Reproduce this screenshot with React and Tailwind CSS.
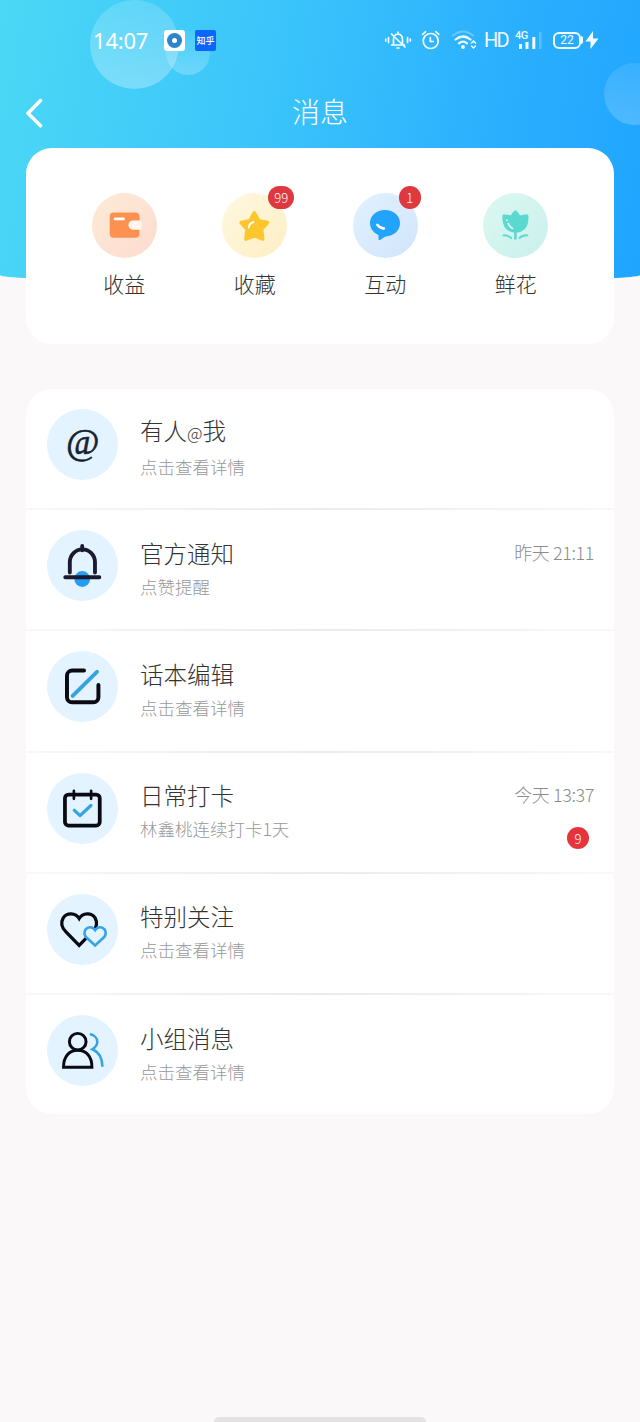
import React from 'react';

const WalletIcon = () => (
  <svg viewBox="0 0 65 65" className="h-full w-full">
    <rect x="17.7" y="19.5" width="29.8" height="25.3" rx="4" fill="#fd9150" />
    <path d="M23 25.9h8.500" stroke="#fff" strokeWidth="2.6" strokeLinecap="round" />
    <path d="M41 27.5h6.5q2 0 2 2v5.2q0 2-2 2H41a4.6 4.6 0 0 1 0-9.2z" fill="#fff6f0" />
  </svg>
);

const StarIcon = () => (
  <svg viewBox="0 0 65 65" className="h-full w-full">
    <path
      d="M32.3 20l4.4 7.800 8.800 1.700-5.900 6.700 1 9.800-8.300-3.200-8.300 3.200 1-9.800-5.900-6.700 8.800-1.700z"
      fill="#fdc62c"
      stroke="#fdc62c"
      strokeWidth="3.600"
      strokeLinejoin="round"
    />
    <path d="M26.700 34.500q.6-4.300 4.800-5.500" fill="none" stroke="#fff" strokeWidth="1.900" strokeLinecap="round" />
  </svg>
);

const BubbleIcon = () => (
  <svg viewBox="0 0 65 65" className="h-full w-full">
    <path
      d="M32 17c8.600 0 15 5.600 15 13 0 7.800-6.200 13-14.500 13.400-2.500 1.400-4.300 3-5.600 3.600-1 .4-1.500-.3-1.300-1.200l-.2-3.900C20.500 39.700 17 35.600 17 30c0-7.400 6.400-13 15-13z"
      fill="#22a3fd"
    />
    <path d="M24.300 31.700q2.500 3.500 6.700 3.800" fill="none" stroke="#fff" strokeWidth="2.400" strokeLinecap="round" />
  </svg>
);

const FlowerIcon = () => (
  <svg viewBox="0 0 65 65" className="h-full w-full">
    <path
      d="M32.400 17q3.300 2.600 4.600 5.600 3.600-1.500 7.400-1 1 .2 1 1.200C46 33.500 41.500 38.700 33.700 39.500V46.500h-2.600v-7C23.500 38.700 19 33.500 19.400 22.800q0-1 1-1.200 3.800-.5 7.400 1 1.300-3 4.600-5.600z"
      fill="#5bd9d1"
    />
    <path
      d="M20.300 42.300c3.600-.3 6 .7 8 2.900M44.500 42.300c-3.600-.3-6 .7-8 2.900"
      fill="none"
      stroke="#5bd9d1"
      strokeWidth="1.800"
      strokeLinecap="round"
    />
    <path d="M25.300 30.500q1 3.500 4.200 5" fill="none" stroke="#e8fbf8" strokeWidth="1.600" strokeLinecap="round" />
    <circle cx="23.900" cy="27.200" r="0.900" fill="#e8fbf8" />
  </svg>
);

const BellIcon = () => (
  <svg viewBox="0 0 70 70" className="h-full w-full" fill="none" stroke="#1b1a30" strokeWidth="3.800" strokeLinecap="round">
    <circle cx="34.700" cy="48.300" r="7.800" fill="#259df0" stroke="none" />
    <path d="M34.700 15.800V20M22.500 42V31.500a12.400 12.400 0 0 1 24.800 0V42M18 46.600h33.600" />
  </svg>
);

const EditIcon = () => (
  <svg viewBox="0 0 70 70" className="h-full w-full" fill="none" strokeLinecap="round">
    <path d="M36.500 19.300H24.700a5 5 0 0 0-5 5V45.500a5 5 0 0 0 5 5h21a5 5 0 0 0 5-5V33.500" stroke="#0a0a12" strokeWidth="3.900" />
    <path d="M25.300 44.200L49.300 20.500" stroke="#36a3e0" strokeWidth="3.800" />
  </svg>
);

const CalendarIcon = () => (
  <svg viewBox="0 0 70 70" className="h-full w-full" fill="none" strokeLinecap="round">
    <rect x="17.700" y="21.300" width="34.300" height="30.500" rx="3.500" stroke="#0a0a12" strokeWidth="3.700" />
    <path d="M26.500 17.500V25.500M43.500 17.500V25.500" stroke="#0a0a12" strokeWidth="2.600" />
    <path d="M27 36.800l5.600 5.200L43.300 32" stroke="#36a3e0" strokeWidth="3.200" strokeLinejoin="round" />
  </svg>
);

const HeartsIcon = () => (
  <svg viewBox="0 0 70 70" className="h-full w-full">
    <path
      d="M31.700 24.200C28.200 18.200 19.500 18 16 23.500 13.200 28.500 15 33.500 18.500 37.200L31.700 50.700 44.900 37.200C48.400 33.500 50.200 28.500 47.400 23.500 43.900 18 35.200 18.200 31.700 24.200z"
      fill="none"
      stroke="#0a0a12"
      strokeWidth="3.200"
    />
    <path
      d="M47.400 35.600C45 32 40.400 31.800 38 35 36 38.300 37 41.200 39.400 43.400L47.400 50.800 55.400 43.400C57.800 41.200 58.800 38.300 56.800 35 54.400 31.800 49.800 32 47.400 35.600z"
      fill="#e3f3ff"
      stroke="#36a3e8"
      strokeWidth="2.600"
    />
  </svg>
);

const GroupIcon = () => (
  <svg viewBox="0 0 70 70" className="h-full w-full" fill="none" strokeWidth="2.900">
    <circle cx="30.300" cy="26.300" r="8.200" stroke="#0a0a12" />
    <path d="M16.300 51.500c0-10.500 5.500-16.700 14-16.700s14 6.200 14 16.700z" stroke="#0a0a12" />
    <path d="M42.300 18.800c4.500 1 7.300 4.200 7.300 7.600 0 3.200-2 5.600-4.900 7.400 6.300 2.700 9.800 9 10 17.200" stroke="#36a3e0" strokeWidth="2.500" />
  </svg>
);

const AtIcon = () => (
  <span className="-mt-1.5 font-['Liberation_Serif'] text-[36px] italic leading-none text-[#16222f] [-webkit-text-stroke:0.6px_#16222f]">@</span>
);

const StatusIcons = () => (
  <div className="flex h-5 items-center text-[#f2fbff]">
    <svg viewBox="0 0 28 20" className="h-5 w-7" fill="none" stroke="currentColor" strokeWidth="1.700" strokeLinecap="round">
      <path d="M1.700 9v2M4.500 7.500v5M23.500 7.500v5M26.300 9v2M7.500 15h13M9.500 15V9.500q0-5 4.500-5.500 4.500.5 4.500 5.500V15M14 2.200V4M13 18h2M7.500 4l13.500 13" />
    </svg>
    <svg viewBox="0 0 20 20" className="ml-[9px] h-5 w-5" fill="none" stroke="currentColor" strokeWidth="1.700" strokeLinecap="round">
      <circle cx="9.700" cy="11" r="7.500" />
      <path d="M9.300 7.500v4h3M1.600 4.300l3-2.600M17.800 4.300l-3-2.600" />
    </svg>
    <svg viewBox="0 0 26 20" className="ml-2.5 h-5 w-[26px]" fill="none" stroke="currentColor" strokeLinecap="round">
      <path d="M2 5.500q10-8 20 0" strokeWidth="2" opacity="0.3" />
      <path d="M4.500 9.500q7.500-6 15 0M8 13.300q4-3.200 8 0" strokeWidth="2.200" />
      <circle cx="12" cy="17" r="1.900" fill="currentColor" stroke="none" />
      <path d="M20.500 13l2-2 2 2M20.500 16l2 2 2-2" strokeWidth="1.500" />
    </svg>
    <span className="ml-[7px] w-[25px] font-['Roboto'] text-[20px] font-normal leading-5 tracking-[-1.8px]">HD</span>
    <div className="ml-1.5 flex h-5 items-end">
      <span className="w-[13px] self-start font-['Roboto'] text-[11px] font-medium leading-3 tracking-[-0.5px]">4G</span>
      <svg viewBox="0 0 24 20" className="-ml-2.5 h-5 w-6" fill="currentColor">
        <path d="M1 14h3v5H1zM7.500 12h3v7h-3zM14.300 7h3v12h-3z" />
        <path d="M21 2h2.500v17H21z" opacity="0.25" />
      </svg>
    </div>
    <div className="ml-[11px] flex h-[17px] w-7 items-center justify-center rounded-[6px] border-2 border-current font-['Roboto'] text-[12px] font-normal leading-none">
      22
    </div>
    <div className="h-2 w-[2px] rounded-r bg-current"></div>
    <svg viewBox="0 0 14 20" className="ml-0.5 h-5 w-3.5" fill="currentColor">
      <path d="M8 1v7.500h5.500L5.500 19v-7.500H0.500z" />
    </svg>
  </div>
);

const shortcuts = [
  { name: '收益', icon: WalletIcon, bg: 'bg-linear-to-br from-[#fdebd6] to-[#fddbd0]' },
  { name: '收藏', icon: StarIcon, bg: 'bg-linear-to-br from-[#fff8e2] to-[#fdeec2]', badge: 99 },
  { name: '互动', icon: BubbleIcon, bg: 'bg-linear-to-br from-[#e0f2fe] to-[#d2e4fb]', badge: 1 },
  { name: '鲜花', icon: FlowerIcon, bg: 'bg-linear-to-br from-[#dcf8ef] to-[#c9f0ee]' },
];

const messages = [
  { title: <>有人<span className="text-[17px]">@</span>我</>, desc: '点击查看详情', icon: AtIcon },
  { title: '官方通知', desc: '点赞提醒', icon: BellIcon, time: '昨天 21:11' },
  { title: '话本编辑', desc: '点击查看详情', icon: EditIcon },
  { title: '日常打卡', desc: '林鑫桃连续打卡1天', icon: CalendarIcon, time: '今天 13:37', badge: 9 },
  { title: '特别关注', desc: '点击查看详情', icon: HeartsIcon },
  { title: '小组消息', desc: '点击查看详情', icon: GroupIcon },
];

const Shortcut = ({ item }) => {
  const Icon = item.icon;
  return (
    <div className="flex flex-col items-center">
      <div className={`relative size-[65px] rounded-full ${item.bg}`}>
        <Icon />
        {item.badge && (
          <span className="absolute -top-[7px] left-[46px] flex h-[23px] min-w-[22px] items-center justify-center rounded-full bg-[#e0383f] px-[6px] text-[13px] font-light leading-none text-white">
            {item.badge}
          </span>
        )}
      </div>
      <span className="mt-[9px] text-[21px] leading-8 text-[#333]">{item.name}</span>
    </div>
  );
};

const MessageRow = ({ item }) => {
  const Icon = item.icon;
  return (
    <div className="group flex h-[121.2px] flex-col last:h-[119.5px]">
      <div className="flex flex-1 items-center pl-[21px] pr-5">
        <div className="-mt-2 flex size-[71px] items-center justify-center rounded-full bg-[#e3f3ff]">
          <Icon />
        </div>
        <div className="ml-[22px] flex-1">
          <div className="text-[23.5px] leading-[34px] text-[#333]">{item.title}</div>
          <div className="text-[17.5px] leading-[34px] text-[#999]">{item.desc}</div>
        </div>
        <div className="flex h-[68px] flex-col items-end">
          {item.time && (
            <span className="text-[18px] leading-[32px] tracking-[-0.4px] text-[#8c8c8c]">{item.time}</span>
          )}
          {item.badge && (
            <span className="mr-[5px] mt-[17px] flex size-[22px] shrink-0 items-center justify-center rounded-full bg-[#e5343b] text-[13px] leading-none text-white">
              {item.badge}
            </span>
          )}
        </div>
      </div>
      <div className="h-[2px] bg-linear-to-r from-[#f8f8f8] via-[#ebebeb] to-[#f8f8f8] group-last:hidden"></div>
    </div>
  );
};

const App = () => {
  return (
    <div className="flex h-[1422px] w-[640px] flex-col overflow-hidden bg-[#faf8f9] font-['Noto_Sans_CJK_SC',sans-serif] font-light">
      <header className="relative h-[283px] shrink-0 overflow-hidden rounded-b-[50%_8px] bg-linear-[100deg,#4bd8f5_0%,#3ac4fb_42%,#2aaffe_76%,#20a5ff_100%]">
        {/* Bulles décoratives */}
        <div className="absolute left-[166px] top-[31px] size-[44px] rounded-full bg-linear-to-b from-white/5 to-white/25"></div>
        <div className="absolute left-[90px] top-0 size-[89px] rounded-full bg-linear-to-b from-white/15 to-white/30"></div>
        <div className="absolute left-[604px] top-[63px] size-[62px] rounded-full bg-linear-to-b from-white/10 to-white/20"></div>

        <div className="relative flex h-20 items-center justify-between pl-[93px] pr-[41px]">
          <div className="flex items-center">
            <span className="w-[71px] font-['Noto_Sans'] text-[22px] font-normal leading-none tracking-[-0.2px] text-white">14:07</span>
            <div className="flex size-[21px] items-center justify-center rounded-[3px] bg-white">
              <div className="flex size-[15px] items-center justify-center rounded-full bg-[#2b84cc]">
                <div className="size-[5px] rounded-full bg-white"></div>
              </div>
            </div>
            <div className="ml-2.5 flex size-[21px] items-center justify-center rounded-[2px] bg-[#0a66ff] text-[9px] font-medium leading-none text-white">
              知乎
            </div>
          </div>
          <StatusIcons />
        </div>

        <div className="relative grid h-[66px] grid-cols-[1fr_auto_1fr] items-center">
          <svg viewBox="0 0 18 30" className="ml-[25px] h-[30px] w-[18px]" fill="none" stroke="#fff" strokeWidth="3.500" strokeLinecap="round" strokeLinejoin="round">
            <path d="M15.500 2.500L3 15.200 15.500 27.800" />
          </svg>
          <h1 className="-mt-1 text-[28px] leading-none text-white">消息</h1>
        </div>
      </header>

      <section className="relative mx-[26px] -mt-[135px] flex h-[196px] shrink-0 justify-around rounded-[26px] bg-white px-[33px] pt-[45px]">
        {shortcuts.map((item) => (
          <Shortcut key={item.name} item={item} />
        ))}
      </section>

      <section className="mx-[26px] mt-[45px] shrink-0 rounded-[26px] bg-white">
        {messages.map((item, index) => (
          <MessageRow key={index} item={item} />
        ))}
      </section>

      <div className="mx-auto mt-auto h-[5px] w-[212px] rounded-t-full bg-[#e4e2e3]"></div>
    </div>
  );
};

export default App;
